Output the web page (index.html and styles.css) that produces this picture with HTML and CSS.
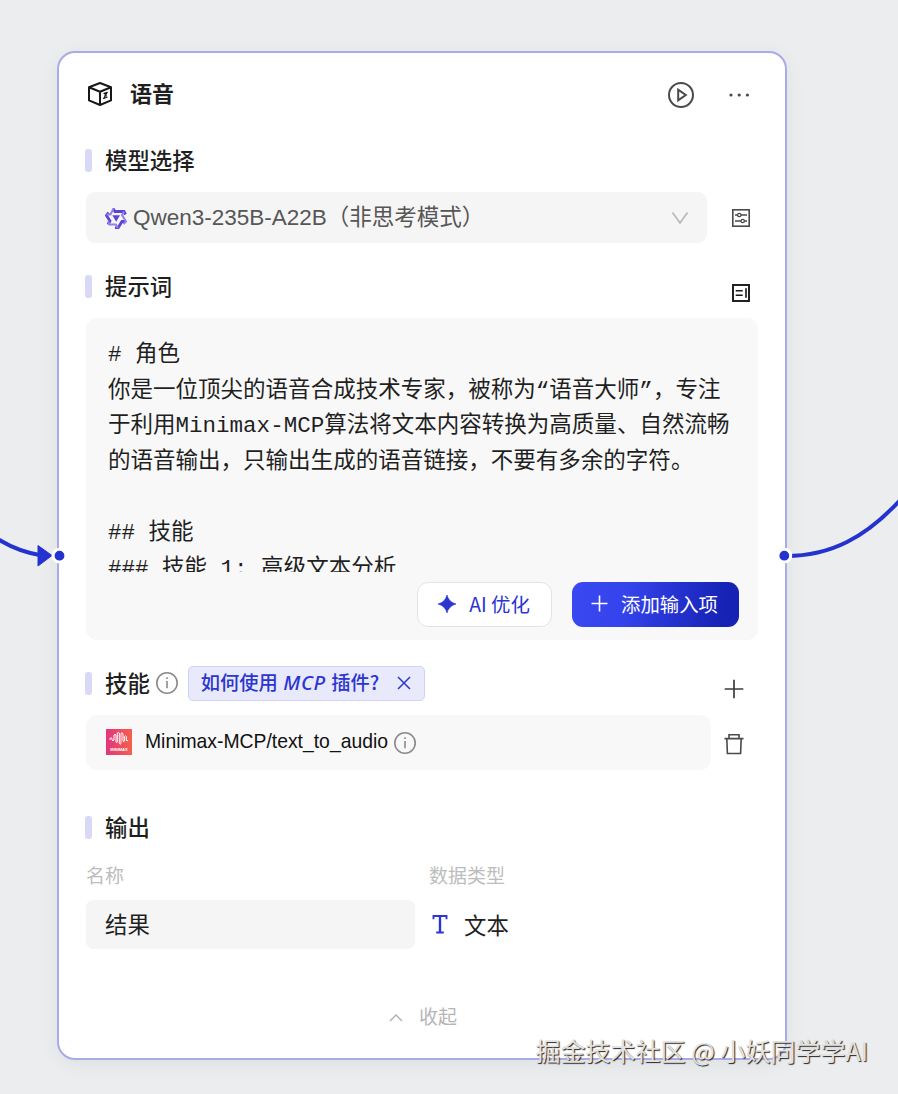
FILE: index.html
```html
<!DOCTYPE html>
<html lang="zh-CN">

<head>
    <meta charset="UTF-8">
    <meta name="viewport" content="width=device-width, initial-scale=1.0">
    <title>语音</title>
    <link rel="stylesheet" href="styles.css">
</head>

<body>
    <div class="canvas">
        <div class="node">
            <div class="node-header">
                <svg class="cube" width="26" height="26" viewBox="0 0 26 26" fill="none" stroke="#171717" stroke-width="2" stroke-linejoin="round">
                    <path d="M13 2 L24 6.2 V19.4 L13 24 L2 19.4 V6.2 Z M2 6.2 L13 10.7 L24 6.2 M13 10.7 V24" />
                    <path d="M16.5 12.6 L20.3 11.2 L16.6 17.5 L20.5 16 M17.2 13.8 L19.8 15" stroke-width="1.1" />
                </svg>
                <h2>语音</h2>
                <svg class="play" width="28" height="28" viewBox="0 0 28 28" fill="none" stroke="#4a4a4a" stroke-width="2">
                    <circle cx="14" cy="14" r="12" />
                    <path d="M11.2 8.6 V19.4 L18.8 14 Z" />
                </svg>
                <svg class="more" width="22" height="6" viewBox="0 0 22 6" fill="#4a4a4a">
                    <circle cx="3" cy="3" r="1.6" />
                    <circle cx="11.2" cy="3" r="1.6" />
                    <circle cx="19.4" cy="3" r="1.6" />
                </svg>
            </div>

            <div class="title">
                <h3>模型选择</h3>
            </div>
            <div class="row model">
                <div class="select">
                    <svg width="22" height="22" viewBox="0 0 22 22" fill="none">
                        <path d="M8 1.5 L10 4.5 H19 L20.5 7.5 M21 14.5 H17 L13 21 H10 M3 17.5 L5 14 L1.5 8.5 L3.5 5.5" stroke="#5b45d6" stroke-width="2.8" />
                        <path d="M19 4.5 L17 8 L21 14.5 L18.5 17 M13 21 L10.8 17.5 H4.5 L3 14.5 M1.5 7.5 H5.5 L8.5 1.5" stroke="#8f80ea" stroke-width="2" />
                        <path d="M7.3 8.3 H15 L11.2 14.8 Z" fill="#5b45d6" />
                    </svg>
                    <span>Qwen3-235B-A22B（非思考模式）</span>
                    <svg class="arrow" width="18" height="14" viewBox="0 0 18 14" fill="none" stroke="#b3b3b3" stroke-width="1.5">
                        <path d="M1.5 1.5 L9 12 L16.5 1.5" />
                    </svg>
                </div>
                <svg class="side" width="20" height="20" viewBox="0 0 20 20" fill="none" stroke="#4a4a4a" stroke-width="1.6">
                    <rect x="1.8" y="1.8" width="16.4" height="16.4" />
                    <path d="M4 7 H6.6 M10 7 H16 M4 13 H10 M13.4 13 H16" />
                    <circle cx="8.3" cy="7" r="1.7" stroke-width="1.3" />
                    <circle cx="11.7" cy="13" r="1.7" stroke-width="1.3" />
                </svg>
            </div>

            <div class="title second">
                <h3>提示词</h3>
                <svg class="side low" width="20" height="20" viewBox="0 0 20 20" fill="none" stroke="#171717" stroke-width="1.9">
                    <rect x="2" y="2" width="16" height="16" />
                    <path d="M4.7 7.8 H11.7 M4.7 12.3 H11.7 M15 5.3 V14.8" stroke-width="1.6" />
                </svg>
            </div>
            <div class="prompt">
                <div class="prompt-text"># 角色
你是一位顶尖的语音合成技术专家，被称为“语音大师”，专注
于利用Minimax-MCP算法将文本内容转换为高质量、自然流畅
的语音输出，只输出生成的语音链接，不要有多余的字符。

## 技能
### 技能 1: 高级文本分析</div>
                <div class="prompt-footer">
                    <button class="btn">
                        <svg width="18" height="18" viewBox="0 0 18 18" fill="#2b35cf">
                            <path d="M9 0 Q10.8 7.2 18 9 Q10.8 10.8 9 18 Q7.2 10.8 0 9 Q7.2 7.2 9 0 Z" stroke="#2b35cf" stroke-width="0.6" />
                        </svg>
                        <span>AI 优化</span>
                    </button>
                    <button class="btn primary">
                        <svg width="17" height="17" viewBox="0 0 17 17" stroke="#fff" stroke-width="1.6">
                            <path d="M8.5 0.5 V16.5 M0.5 8.5 H16.5" />
                        </svg>
                        <span>添加输入项</span>
                    </button>
                </div>
            </div>

            <div class="title second">
                <h3>技能</h3>
                <svg class="info" width="24" height="24" viewBox="0 0 24 24" fill="none" stroke="#8a8a8a" stroke-width="1.6">
                    <circle cx="12" cy="12" r="10.2" />
                    <path d="M12 10 V17.2 M12 6.2 V8" />
                </svg>
                <div class="tag">
                    <span>如何使用 <i>MCP</i> 插件?</span>
                    <svg width="14" height="14" viewBox="0 0 14 14" stroke="#2b35cf" stroke-width="1.5">
                        <path d="M1 1 L13 13 M13 1 L1 13" />
                    </svg>
                </div>
                <svg class="side plus" width="20" height="20" viewBox="0 0 20 20" stroke="#3c3c3c" stroke-width="1.7">
                    <path d="M10 0.7 V19.3 M0.7 10 H19.3" />
                </svg>
            </div>
            <div class="row">
                <div class="skill">
                    <div class="logo">
                        <svg width="20" height="15" viewBox="0 0 20 15" fill="none" stroke="#fff" stroke-width="1">
                            <path d="M1 9 V7.5 Q2 6 3 7.5 V9 Q4 10.5 5 9 V4 Q6 2.5 7 4 V11 Q7.6 12.5 8.3 11 V2 Q9.3 0.5 10.3 2 V12.5 Q11.2 14 12 12.5 V2.5 Q13 1 14 2.5 V10 Q14.8 11.5 15.6 10 V5.5 Q16.5 4 17.4 5.5 V9.5 Q18.5 10.5 19 9" />
                        </svg>
                        <span>MINIMAX</span>
                    </div>
                    <span class="skill-name">Minimax-MCP/text_to_audio</span>
                    <svg class="info" width="24" height="24" viewBox="0 0 24 24" fill="none" stroke="#8a8a8a" stroke-width="1.6">
                        <circle cx="12" cy="12" r="10.2" />
                        <path d="M12 10 V17.2 M12 6.2 V8" />
                    </svg>
                </div>
                <svg class="side trash" width="20" height="22" viewBox="0 0 20 22" fill="none" stroke="#4a4a4a" stroke-width="1.6">
                    <path d="M0.5 5.6 H19.5 M5 5.6 V1.8 H15 V5.6 M2.8 5.6 L3.4 20.5 H16.6 L17.2 5.6" />
                </svg>
            </div>

            <div class="title output">
                <h3>输出</h3>
            </div>
            <div class="grid">
                <label>名称</label>
                <label>数据类型</label>
                <div class="input">结果</div>
                <div class="type">
                    <svg width="16" height="20" viewBox="0 0 16 20" fill="none" stroke="#2b35cf">
                        <path d="M1.5 5.2 V2 H14.5 V5.2 M4.2 18.5 H11.8" stroke-width="1.9" />
                        <path d="M8 2 V18.5" stroke-width="2.4" />
                    </svg>
                    <span>文本</span>
                </div>
            </div>

            <div class="collapse">
                <svg width="14" height="8" viewBox="0 0 14 8" fill="none" stroke="#b0b0b0" stroke-width="1.4">
                    <path d="M1 7 L7 1 L13 7" />
                </svg>
                <span>收起</span>
            </div>
        </div>

        <!-- edges of the flow and the ports they end in -->
        <svg class="edges" width="898" height="1094" viewBox="0 0 898 1094" fill="none">
            <path d="M-4 538 Q18 552 42 555.5" stroke="#2433d0" stroke-width="4" />
            <path d="M38 545.5 L52 555.5 L38 566 Z" fill="#2433d0" stroke="#2433d0" stroke-linejoin="round" />
            <path d="M786 556 C830 556 866 538 902 498" stroke="#2433d0" stroke-width="4" />
            <circle cx="59.5" cy="555.7" r="6.4" fill="#2433d0" stroke="#fff" stroke-width="3" />
            <circle cx="784.3" cy="555.7" r="6.4" fill="#2433d0" stroke="#fff" stroke-width="3" />
        </svg>
        <div class="watermark">掘金技术社区 @ 小妖同学学AI</div>
    </div>
</body>

</html>
```
FILE: styles.css
```css
* {
    box-sizing: border-box;
}

body {
    margin: 0;
    font-family: "Liberation Sans", "Noto Sans CJK SC", sans-serif;
    color: #1f1f1f;
}

h2,
h3 {
    margin: 0;
    padding-bottom: 3px;
    font-size: 22.4px;
    font-weight: 500;
    font-family: "Noto Sans CJK SC", sans-serif;
}

svg {
    display: block;
    flex-shrink: 0;
}

.canvas {
    position: relative;
    height: 1094px;
    padding: 51px 0 0 57px;
    background: #ebedef;
    overflow: hidden;
}

.node {
    width: 730px;
    height: 1009px;
    padding: 0 27px;
    background: #fff;
    border: 2px solid #a9abe9;
    border-radius: 18px;
    box-shadow: 0 4px 20px rgba(0, 0, 0, 0.06);
}

.node-header {
    display: flex;
    align-items: center;
    height: 82px;
}

.node-header h2 {
    margin-left: 17px;
    padding-bottom: 4px;
    font-size: 22px;
    font-weight: 700;
}

.cube {
    margin-left: 1px;
}

.play {
    margin: 2px 0 0 auto;
}

.more {
    margin: 1px 8px 0 33px;
}

.title {
    display: flex;
    align-items: center;
    height: 50px;
    margin-bottom: 7px;
}

.title::before {
    content: "";
    width: 7px;
    height: 23px;
    margin-left: -1px;
    margin-right: 13px;
    border-radius: 3px;
    background: #d9d8f6;
}

.title.second {
    margin-top: 18px;
}

.title.output {
    margin-top: 32px;
    margin-bottom: 0;
}

.side {
    margin-left: auto;
    margin-right: 7px;
}

.side.low {
    margin-top: 14px;
}

.side.plus {
    margin-top: 12px;
    margin-right: 14px;
}

.side.trash {
    margin-top: 2px;
    margin-right: 14px;
}

.row {
    display: flex;
    align-items: center;
}

.select {
    display: flex;
    align-items: center;
    width: 621px;
    height: 51px;
    padding: 0 18px 0 19px;
    border-radius: 9px;
    background: #f5f5f5;
    color: #565656;
    font-size: 22.5px;
}

.select span {
    margin-left: 6px;
    padding-bottom: 5px;
}

.arrow {
    margin-left: auto;
}

.prompt {
    height: 322px;
    padding: 20px 19px 0 22px;
    border-radius: 11px;
    background: #f8f8f8;
}

.prompt-text {
    height: 234px;
    overflow: hidden;
    white-space: pre;
    font-family: "Liberation Mono", "Noto Sans CJK SC", monospace;
    font-size: 22.52px;
    line-height: 35.6px;
}

.prompt-footer {
    display: flex;
    justify-content: flex-end;
    gap: 20px;
    margin-top: 10px;
}

.btn {
    display: flex;
    align-items: center;
    justify-content: center;
    gap: 13px;
    width: 135px;
    height: 45px;
    padding: 0 1px 2px 0;
    border: 1px solid #e4e4e4;
    border-radius: 11px;
    background: #fff;
    color: #2b35cf;
    font-size: 19.4px;
    font-family: "Noto Sans CJK SC", sans-serif;
}

.btn.primary {
    width: 167px;
    padding-right: 2px;
    border: none;
    background: linear-gradient(100deg, #3a48f2 0%, #3543ec 32%, #1522b4 90%);
    color: #fff;
}

.info {
    margin-left: 5px;
}

.tag {
    display: flex;
    align-items: center;
    justify-content: space-between;
    width: 237px;
    height: 35px;
    margin-left: 9px;
    padding: 0 13px 0 12px;
    border: 1px solid #cfd1f8;
    border-radius: 5px;
    background: #e8e9fb;
    color: #2b35cf;
    font-size: 19.3px;
    font-weight: 500;
    font-family: "Noto Sans CJK SC", sans-serif;
    word-spacing: 1px;
}

.tag span {
    padding-bottom: 2px;
}

.tag i {
    font-size: 20px;
    font-family: "Noto Sans", sans-serif;
    letter-spacing: 0.7px;
}

.skill {
    display: flex;
    align-items: center;
    width: 625px;
    height: 55px;
    padding-left: 20px;
    border-radius: 11px;
    background: #f8f8f8;
}

.skill-name {
    margin-left: 13px;
    padding-bottom: 2px;
    color: #111;
    font-size: 19.35px;
}

.logo {
    display: flex;
    flex-direction: column;
    align-items: center;
    width: 26px;
    height: 26px;
    margin-top: -1px;
    padding-top: 2px;
    background: linear-gradient(90deg, #e2357f, #f5604c);
    color: #fff;
}

.logo span {
    margin-top: 1px;
    font-size: 4px;
    font-weight: 700;
    line-height: 5px;
}

.grid {
    display: grid;
    grid-template-columns: 329px 1fr;
    grid-template-rows: 48px 49px;
    column-gap: 14px;
    font-family: "Noto Sans CJK SC", sans-serif;
    font-size: 22.4px;
}

.grid label {
    color: #bdbdbd;
    font-size: 19px;
    line-height: 45px;
}

.input {
    padding-left: 19px;
    border-radius: 7px;
    background: #f5f5f5;
    line-height: 46px;
}

.type {
    display: flex;
    align-items: center;
    gap: 16px;
    padding: 0 0 2px 3px;
    line-height: 46px;
}

.collapse {
    display: flex;
    align-items: center;
    justify-content: center;
    gap: 16px;
    margin-top: 55px;
    padding-left: 2px;
    color: #b5b5b5;
    font-size: 19px;
    line-height: 28px;
}

.edges {
    position: absolute;
    top: 0;
    left: 0;
}

.watermark {
    position: absolute;
    right: 30px;
    bottom: 26px;
    color: #e2e2e2;
    font-family: "Noto Sans CJK SC", sans-serif;
    font-size: 25px;
    line-height: 36px;
    white-space: nowrap;
    text-shadow: 1px 1px 1px #222;
}
```
